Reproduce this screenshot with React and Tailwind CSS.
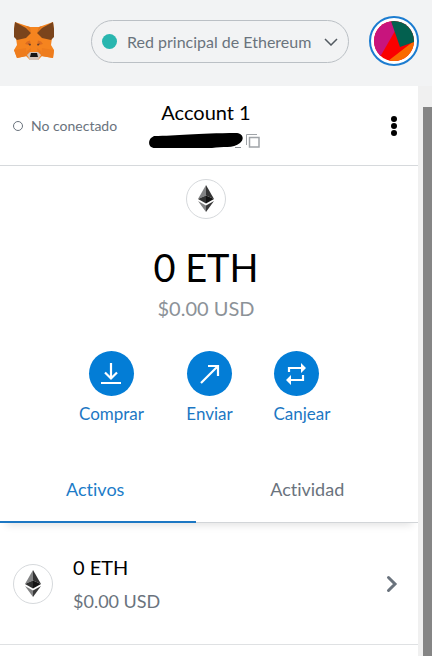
import React from "react";

function Fox() {
  return (
    <svg viewBox="0 0 42 40" className="h-10 w-[42px]" role="img" aria-label="MetaMask">
      <path d="M2 2 L17 7 H26 L40 2 L41 11 L39 18 L38 25 L41 30 L40 38 L29 36 L25 40 H17 L13 36 L4 38 L1 30 L4 25 L3 18 L1 11Z" fill="#f5841f" />
      <path d="M2 2 L13 8 L18 13 L13 18 L4 20 L1 17 L1 9Z" fill="#7a441c" />
      <path d="M40 2 L29 8 L24 13 L29 18 L38 20 L41 17 L41 9Z" fill="#7a441c" />
      <path d="M13 6 L17 7 L18 13Z M29 6 L26 7 L24 13Z" fill="#e2761b" />
      <path d="M1 30 L13 28 L14 36 L4 38Z M41 30 L29 28 L28 36 L40 38Z" fill="#ee7c1d" />
      <path d="M14 21.500 L17 20.500 L18 25.500 L12 24Z M28 21.500 L25 20.500 L24 25.500 L30 24Z" fill="#dd6c20" />
      <path d="M15 23.500 L18 24 L17 26Z M27 23.500 L24 24 L25 26Z" fill="#5d4030" />
      <path d="M14 31 L18 28 L17 33 L14 35Z M28 31 L24 28 L25 33 L28 35Z" fill="#ea7a20" />
      <path d="M14 35 L17 32 H25 L28 35 L25 40 H17Z" fill="#d2c3b8" />
      <path d="M18 33 H24 L25 37 H17Z" fill="#161616" />
    </svg>
  );
}

function EthIcon() {
  return (
    <span className="flex size-10 shrink-0 items-center justify-center rounded-full border border-[#d6d9dc] bg-white">
      <svg viewBox="0 0 18 28" className="h-7 w-[18px]" aria-hidden="true">
        <path d="M9 0 L1 14 L9 10.500Z" fill="#828384" />
        <path d="M9 0 L17 14 L9 10.500Z" fill="#343434" />
        <path d="M1 14 L9 10.500 V18.500Z" fill="#2f3030" />
        <path d="M17 14 L9 10.500 V18.500Z" fill="#131313" />
        <path d="M1 16 L9 20.500 V27Z" fill="#828384" />
        <path d="M17 16 L9 20.500 V27Z" fill="#393939" />
      </svg>
    </span>
  );
}

function Action({ label, children, className }) {
  return (
    <button type="button" className={`flex flex-col gap-2 text-[17px] leading-5 text-[#1c77c3] ${className}`}>
      <span className="flex size-[45px] items-center justify-center rounded-full bg-[#037dd6]">
        <svg viewBox="0 0 24 24" className="size-6" fill="none" stroke="white" strokeWidth="2.200" aria-hidden="true">
          {children}
        </svg>
      </span>
      <span>{label}</span>
    </button>
  );
}

function Header() {
  return (
    <header className="flex h-[86px] items-start bg-[#f2f3f4] pr-[13px] pl-[13px]">
      <div className="mt-5 shrink-0">
        <Fox />
      </div>
      <button type="button" className="mt-5 ml-9 flex h-[43px] min-w-0 flex-1 items-center rounded-full border border-[#bbc0c5] px-[10px] text-base text-[#6a737d]">
        <span className="size-[15px] shrink-0 rounded-full bg-[#29b6af]" />
        <span className="ml-[10px] flex-1 text-left whitespace-nowrap">Red principal de Ethereum</span>
        <svg viewBox="0 0 14 8" className="h-2 w-[14px] shrink-0" fill="none" stroke="#535a61" strokeWidth="1.500" aria-hidden="true">
          <path d="M1 1 L7 7 L13 1" />
        </svg>
      </button>
      <button type="button" aria-label="Mi cuenta" className="mt-4 ml-5 flex size-[50px] shrink-0 items-center justify-center rounded-full border-2 border-[#1c7cd0] bg-white">
        <svg viewBox="0 0 40 40" className="size-10 rounded-full" aria-hidden="true">
          <rect width="40" height="40" fill="#fa0000" />
          <path d="M0 0 H17 L21 10 L6 36 L0 40Z" fill="#c8147d" />
          <path d="M40 20 L14 40 H40Z" fill="#f96a01" />
          <path d="M17 0 H40 V21 L26 26Z" fill="#03604f" />
        </svg>
      </button>
    </header>
  );
}

function MenuBar() {
  return (
    <div className="grid h-20 grid-cols-[148px_1fr_154px] border-b border-[#d6d9dc]">
      <button type="button" className="flex items-center gap-2 pl-[13px] text-sm text-[#6a737d]">
        <span className="size-[10px] rounded-full border border-[#6a737d]" />
        No conectado
      </button>
      <button type="button" className="flex flex-col items-center pt-3">
        <span className="text-xl leading-7 text-black">Account 1</span>
        <span className="mt-[7px] flex items-center gap-[3px] pr-1">
          <svg viewBox="0 0 94 16" className="h-4 w-[94px]" aria-hidden="true">
            <path d="M5 3 C28 3 47 0 88 0 C95 1 95 7 91 10 C84 16 74 13 63 15 H6 C-1 15 -1 8 2 5Z" fill="black" />
            <path d="M86 14.500 H92" stroke="#8c9196" />
          </svg>
          <svg viewBox="0 0 14 14" className="size-[14px]" fill="none" stroke="#a0a4a8" aria-hidden="true">
            <path d="M.5 11 V.5 H11" />
            <path d="M3.500 3.500 H13 V13 H3.500Z" strokeWidth="1.500" />
          </svg>
        </span>
      </button>
      <button type="button" aria-label="Opciones de la cuenta" className="flex items-center justify-end pr-5">
        <svg viewBox="0 0 8 20" className="h-5 w-2" aria-hidden="true">
          <circle cx="4" cy="3" r="3" />
          <circle cx="4" cy="10" r="3" />
          <circle cx="4" cy="17" r="3" />
        </svg>
      </button>
    </div>
  );
}

function Overview() {
  return (
    <section className="flex flex-col items-center pt-[13px] pr-[6px]">
      <EthIcon />
      <div className="mt-6 text-[38px] leading-[48px] text-black">0 ETH</div>
      <div className="mt-[3px] text-xl leading-7 text-[#8c9298]">$0.00 USD</div>
      <div className="mt-[29px] flex gap-[41px]">
        <Action label="Comprar" className="w-[68px] items-center">
          <path d="M11 1 V16 M5 10.500 L11 16.500 L17 10.500 M1 21 H21" />
        </Action>
        <Action label="Enviar" className="w-[46px] items-center">
          <path d="M3 21 L19 5 M10 4 H20 V14" />
        </Action>
        <Action label="Canjear" className="w-[61px] items-start">
          <path d="M5 10 V6 H18 M19 13 V18 H6" />
          <path d="M17 1 L22 6 L17 11Z M7 13 L2 18 L7 23Z" fill="white" stroke="none" />
        </Action>
      </div>
    </section>
  );
}

function Tabs() {
  return (
    <div role="tablist" className="mt-8 flex h-[67px] border-b border-[#d2d5d8] text-lg shadow-[0_8px_8px_-6px_rgba(0,0,0,0.12)] [font-variant-ligatures:none]">
      <button type="button" role="tab" aria-selected="true" className="-mb-px w-[47%] border-b-2 border-[#1c77c3] pr-[6px] text-[#1c7cc8]">
        Activos
      </button>
      <button type="button" role="tab" aria-selected="false" className="flex-1 text-[#6a737d]">
        Actividad
      </button>
    </div>
  );
}

function AssetRow() {
  return (
    <button type="button" className="flex h-[122px] w-full items-center border-b border-[#dfe1e3] pr-5 pl-[13px] text-left">
      <EthIcon />
      <span className="ml-5 flex flex-1 flex-col gap-[6px]">
        <span className="text-xl leading-7 text-black">0 ETH</span>
        <span className="text-lg leading-7 text-[#6a737d]">$0.00 USD</span>
      </span>
      <svg viewBox="0 0 12 18" className="h-[18px] w-3" fill="none" stroke="#6a737d" strokeWidth="3" strokeLinecap="round" aria-hidden="true">
        <path d="M2.500 2.500 L9 9 L2.500 15.500" />
      </svg>
    </button>
  );
}

export default function App() {
  return (
    <div className="flex min-h-screen flex-col bg-white font-['Lato',sans-serif]">
      <Header />
      <div className="flex flex-1">
        <main className="min-w-0 flex-1">
          <MenuBar />
          <Overview />
          <Tabs />
          <AssetRow />
        </main>
        <div className="flex w-[14px] shrink-0 bg-[#f0f0f0] pt-[21px] pl-[5px]" aria-hidden="true">
          <div className="flex-1 bg-[#858585]" />
        </div>
      </div>
    </div>
  );
}
